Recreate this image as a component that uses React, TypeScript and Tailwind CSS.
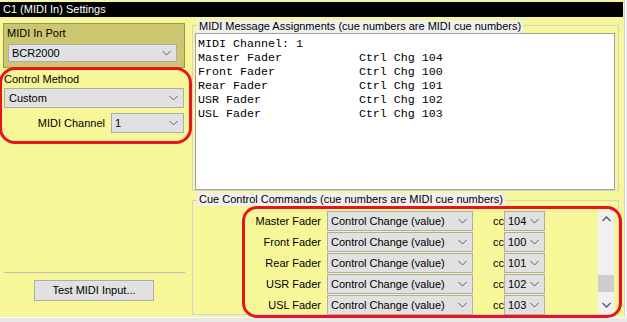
import React from "react";

const Chevron = ({ className = "" }: { className?: string }) => (
  <svg width="9" height="6" viewBox="0 0 9 6" className={className}>
    <polyline points="0.5,1 4.5,5 8.5,1" fill="none" stroke="#606060" strokeWidth="1" />
  </svg>
);

const Dropdown = ({ text, className = "" }: { text: string; className?: string }) => (
  <div
    className={`flex items-center justify-between bg-[#e1e1e1] border border-[#adadad] pl-[3px] pr-[5px] leading-[14px] ${className}`}
  >
    <span>{text}</span>
    <Chevron />
  </div>
);

const mono = [
  ["Master Fader", "Ctrl Chg 104"],
  ["Front Fader", "Ctrl Chg 100"],
  ["Rear Fader", "Ctrl Chg 101"],
  ["USR Fader", "Ctrl Chg 102"],
  ["USL Fader", "Ctrl Chg 103"],
];

const rows = [
  ["Master Fader", "104"],
  ["Front Fader", "100"],
  ["Rear Fader", "101"],
  ["USR Fader", "102"],
  ["USL Fader", "103"],
];

export default function App() {
  return (
    <div className="w-[627px] h-[322px] bg-[#e8e8e8] overflow-hidden font-['Liberation_Sans',sans-serif] text-[11px] text-black">
      <div className="w-[626px] h-[318px] bg-white">
        <div className="w-[625px] h-[317px] bg-[#f7f79a] border-r border-[#d4d4d4] pt-[2px] flex flex-col">
          <div className="w-[623px] h-[15px] bg-black text-white pl-[3px] leading-[15px] shrink-0">
            C1 (MIDI In) Settings
          </div>
          <div className="flex flex-1">
            {/* Left column */}
            <div className="relative w-[190px] flex flex-col shrink-0">
              <div className="ml-[3px] mt-[6px] w-[182px] h-[45px] border border-[#9c965c] bg-[#cdc670]">
                <div className="pl-[3px] pt-[2px] leading-[14px]">MIDI In Port</div>
                <Dropdown text="BCR2000" className="ml-[4px] mt-[4px] w-[169px] h-[18px]" />
              </div>
              <div className="ml-[4px] mt-[4px] leading-[14px]">Control Method</div>
              <Dropdown text="Custom" className="ml-[4px] mt-[2px] w-[180px] h-[20px] pl-[4px]" />
              <div className="mt-[5px] flex items-center">
                <div className="w-[105px] text-right">MIDI Channel</div>
                <Dropdown text="1" className="ml-[6px] w-[73px] h-[20px]" />
              </div>
              <div className="flex-1" />
              <div className="ml-[4px] w-[181px] h-px bg-[#bdbdbd]" />
              <div className="ml-[34px] mt-[7px] mb-[16px] w-[120px] h-[21px] bg-[#e1e1e1] border border-[#adadad] flex items-center justify-center">
                Test MIDI Input...
              </div>
              <div className="absolute left-[-1px] top-[50px] w-[193px] h-[77px] border-[3px] border-[#e8141c] rounded-[16px]" />
            </div>
            {/* Right column */}
            <div className="flex flex-col ml-[2px]">
              <div className="relative mt-[8px] w-[427px] h-[166px] border border-[#d2d2d2]">
                <div className="absolute left-[4px] top-[-6px] h-[13px] px-[2px] bg-[#f0f0f0] leading-[13px]">
                  MIDI Message Assignments (cue numbers are MIDI cue numbers)
                </div>
                <div className="ml-[2px] mt-[7px] w-[420px] h-[157px] border border-[#a0a0a0] bg-white pl-[2px] pt-[3px] font-['Liberation_Mono',monospace] text-[11.67px] leading-[14px] whitespace-pre">
                  <div>MIDI Channel: 1</div>
                  {mono.map(([a, b]) => (
                    <div key={a}>{a.padEnd(23, " ") + b}</div>
                  ))}
                </div>
              </div>
              <div className="relative mt-[9px] w-[427px] h-[115px] border border-[#d2d2d2] flex">
                <div className="absolute left-[4px] top-[-8px] h-[13px] px-[2px] bg-[#f0f0f0] leading-[13px]">
                  Cue Control Commands (cue numbers are MIDI cue numbers)
                </div>
                <div className="flex-1 flex flex-col gap-[1px] mt-[10px]">
                  {rows.map(([label, cc]) => (
                    <div key={label} className="flex items-center h-[20px]">
                      <div className="w-[128px] text-right">{label}</div>
                      <Dropdown text="Control Change (value)" className="ml-[6px] w-[146px] h-[20px]" />
                      <div className="ml-[20px] w-[11px]">cc</div>
                      <Dropdown text={cc} className="w-[41px] h-[20px] pr-[3px]" />
                    </div>
                  ))}
                </div>
                <div className="mt-[9px] mr-[4px] w-[16px] h-[104px] bg-[#f0f0f0] flex flex-col items-center">
                  <svg width="9" height="6" viewBox="0 0 9 6" className="mt-[6px]">
                    <polyline points="0.5,5 4.5,1 8.5,5" fill="none" stroke="#606060" strokeWidth="1.5" />
                  </svg>
                  <div className="mt-[53px] w-[16px] h-[17px] bg-[#cdcdcd]" />
                  <svg width="9" height="6" viewBox="0 0 9 6" className="mt-[10px]">
                    <polyline points="0.5,1 4.5,5 8.5,1" fill="none" stroke="#606060" strokeWidth="1.5" />
                  </svg>
                </div>
                <div className="absolute left-[49px] top-[5px] w-[380px] h-[112px] border-[3px] border-[#e8141c] rounded-[15px]" />
              </div>
            </div>
          </div>
        </div>
      </div>
    </div>
  );
}
